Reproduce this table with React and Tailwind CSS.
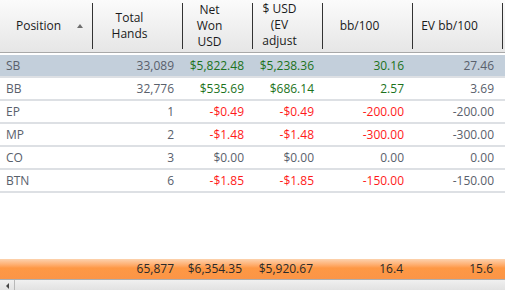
import React from "react";

const rows = [
  { pos: "SB", hands: "33,089", net: "$5,822.48", ev: "$5,238.36", bb: "30.16", evbb: "27.46", c: "g", cbb: "g", sel: true },
  { pos: "BB", hands: "32,776", net: "$535.69", ev: "$686.14", bb: "2.57", evbb: "3.69", c: "g", cbb: "g" },
  { pos: "EP", hands: "1", net: "-$0.49", ev: "-$0.49", bb: "-200.00", evbb: "-200.00", c: "r", cbb: "r" },
  { pos: "MP", hands: "2", net: "-$1.48", ev: "-$1.48", bb: "-300.00", evbb: "-300.00", c: "r", cbb: "r" },
  { pos: "CO", hands: "3", net: "$0.00", ev: "$0.00", bb: "0.00", evbb: "0.00", c: "n", cbb: "n" },
  { pos: "BTN", hands: "6", net: "-$1.85", ev: "-$1.85", bb: "-150.00", evbb: "-150.00", c: "r", cbb: "r" },
];

const colorOf = (c) =>
  c === "g" ? "text-[#1c721c]" : c === "r" ? "text-[#ff1a1a]" : "text-[#59606b]";

function Divider() {
  return <div className="w-px bg-[#333333] my-[3px] self-stretch" />;
}

function HeadCell({ children }) {
  return (
    <div className="flex items-center justify-center pr-4 overflow-hidden">
      <div className="text-center leading-[16px]">{children}</div>
    </div>
  );
}

export default function App() {
  return (
    <div
      className="w-[505px] h-[290px] bg-white flex flex-col overflow-hidden text-[12px]"
      style={{ fontFamily: '"Open Sans", "Noto Sans", sans-serif' }}
    >
      {/* header */}
      <div className="h-[53px] shrink-0 grid grid-cols-[92px_1px_89px_1px_69px_1px_69px_1px_89px_1px_89px_1px_1fr] bg-linear-to-b from-[#fbfbfb] to-[#e6e6e6] border-b border-[#a8a8a8] text-[#1a1a1a]">
        <div className="flex items-center">
          <div className="w-[77px] text-center">Position</div>
          <div className="w-0 h-0 border-l-[3px] border-r-[3px] border-b-[4px] border-l-transparent border-r-transparent border-b-[#6e6e6e] mb-[1px]" />
        </div>
        <Divider />
        <HeadCell>
          Total
          <br />
          Hands
        </HeadCell>
        <Divider />
        <HeadCell>
          Net
          <br />
          Won
          <br />
          USD
        </HeadCell>
        <Divider />
        <div className="flex items-start justify-center pr-4 overflow-hidden pt-[1px]">
          <div className="text-center leading-[16px]">
            $ USD
            <br />
            (EV
            <br />
            adjust
          </div>
        </div>
        <Divider />
        <HeadCell>bb/100</HeadCell>
        <Divider />
        <HeadCell>EV bb/100</HeadCell>
        <Divider />
        <div />
      </div>

      {/* rows */}
      <div className="flex-1 flex flex-col pt-[2px]">
        {rows.map((r) => (
          <div
            key={r.pos}
            className={`h-[23px] grid grid-cols-[93px_90px_70px_70px_90px_90px_1fr] items-center border-b-2 border-[#dde0e4] ${
              r.sel ? "bg-[#c3cfdb]" : "bg-white"
            }`}
          >
            <div className="pl-[6px] text-[#59606b]">{r.pos}</div>
            <div className="text-right pr-[9px] text-[#59606b]">{r.hands}</div>
            <div className={`text-right pr-[9px] ${colorOf(r.c)}`}>{r.net}</div>
            <div className={`text-right pr-[9px] ${colorOf(r.c)}`}>{r.ev}</div>
            <div className={`text-right pr-[9px] ${colorOf(r.cbb)}`}>{r.bb}</div>
            <div className="text-right pr-[9px] text-[#59606b]">{r.evbb}</div>
            <div />
          </div>
        ))}
      </div>

      {/* footer totals */}
      <div className="h-[20px] shrink-0 grid grid-cols-[93px_90px_70px_70px_90px_90px_1fr] items-center bg-linear-to-b from-[#fcd2ad] via-[#fe9844] via-45% to-[#fb9547] text-[#2a2a2a]">
        <div />
        <div className="text-right pr-[9px]">65,877</div>
        <div className="text-right pr-[11px]">$6,354.35</div>
        <div className="text-right pr-[10px]">$5,920.67</div>
        <div className="text-right pr-[10px]">16.4</div>
        <div className="text-right pr-[10px]">15.6</div>
        <div />
      </div>

      {/* scrollbar */}
      <div className="h-[11px] shrink-0 flex border-t border-[#aeaeae] bg-linear-to-b from-[#f0f0f0] to-[#e2e2e2]">
        <div className="w-[15px] flex items-center justify-center border-r border-[#b8b8b8]">
          <div className="w-0 h-0 border-t-[3px] border-b-[3px] border-r-[3px] border-t-transparent border-b-transparent border-r-[#444444] mt-[2px]" />
        </div>
        <div className="flex-1" />
      </div>
    </div>
  );
}
